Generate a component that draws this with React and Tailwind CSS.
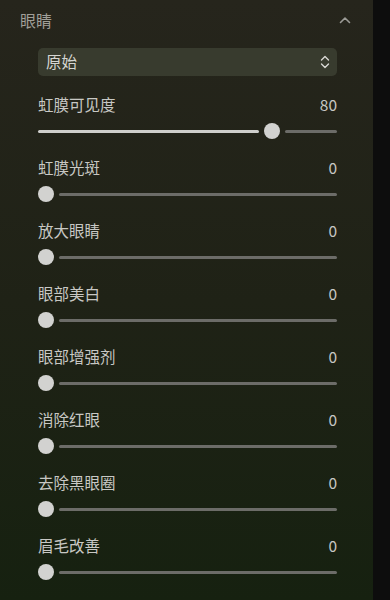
import React from "react";

const sliders = [
  { label: "虹膜可见度", value: 80 },
  { label: "虹膜光斑", value: 0 },
  { label: "放大眼睛", value: 0 },
  { label: "眼部美白", value: 0 },
  { label: "眼部增强剂", value: 0 },
  { label: "消除红眼", value: 0 },
  { label: "去除黑眼圈", value: 0 },
  { label: "眉毛改善", value: 0 },
];

const TRAVEL = 283;

function Slider({ value }) {
  const left = Math.round((value / 100) * TRAVEL);
  return (
    <div className="flex items-center h-4">
      {left > 0 && (
        <div
          className="h-[3px] rounded-full bg-[#cfcfcc] mr-[5px]"
          style={{ width: left - 5 }}
        />
      )}
      <div className="w-4 h-4 rounded-full bg-[#d2d2d0] shrink-0" />
      <div className="h-[3px] flex-1 rounded-full bg-[#6c6c68] ml-[5px]" />
    </div>
  );
}

export default function App() {
  return (
    <div
      className="flex w-[390px] h-[600px] bg-[#0d0d0d] overflow-hidden"
      style={{ fontFamily: '"Noto Sans CJK SC", "Noto Sans", sans-serif' }}
    >
      <div className="w-[373px] h-full bg-gradient-to-b from-[#26251c] via-[#1f2216] to-[#162110]">
        <div className="flex items-center justify-between h-10 pl-5 pr-[22px]">
          <span className="text-[16px] text-[#a09f98]">眼睛</span>
          <svg width="12" height="8" viewBox="0 0 12 8" fill="none">
            <path
              d="M1.5 6.5 L6 2 L10.5 6.5"
              stroke="#9b9b96"
              strokeWidth="1.6"
              strokeLinecap="round"
              strokeLinejoin="round"
            />
          </svg>
        </div>
        <div className="pl-[38px] pr-[36px] mt-2">
          <div className="flex items-center justify-between h-7 rounded-[5px] bg-[#383b2e] pl-2 pr-[7px]">
            <span className="text-[15.5px] text-[#d6d6d2]">原始</span>
            <svg width="10" height="14" viewBox="0 0 10 14" fill="none">
              <path
                d="M1.5 5 L5 1.5 L8.5 5 M1.5 9 L5 12.5 L8.5 9"
                stroke="#d8d8d4"
                strokeWidth="1.4"
                strokeLinecap="round"
                strokeLinejoin="round"
              />
            </svg>
          </div>
        </div>
        <div className="pl-[38px] pr-[36px] mt-[19px] flex flex-col">
          {sliders.map((s) => (
            <div key={s.label} className="h-[63px]">
              <div className="flex items-center justify-between h-5">
                <span className="text-[15.5px] text-[#c8c8c4]">{s.label}</span>
                <span className="text-[15.5px] text-[#c8c8c4]">{s.value}</span>
              </div>
              <div className="mt-2">
                <Slider value={s.value} />
              </div>
            </div>
          ))}
        </div>
      </div>
    </div>
  );
}
